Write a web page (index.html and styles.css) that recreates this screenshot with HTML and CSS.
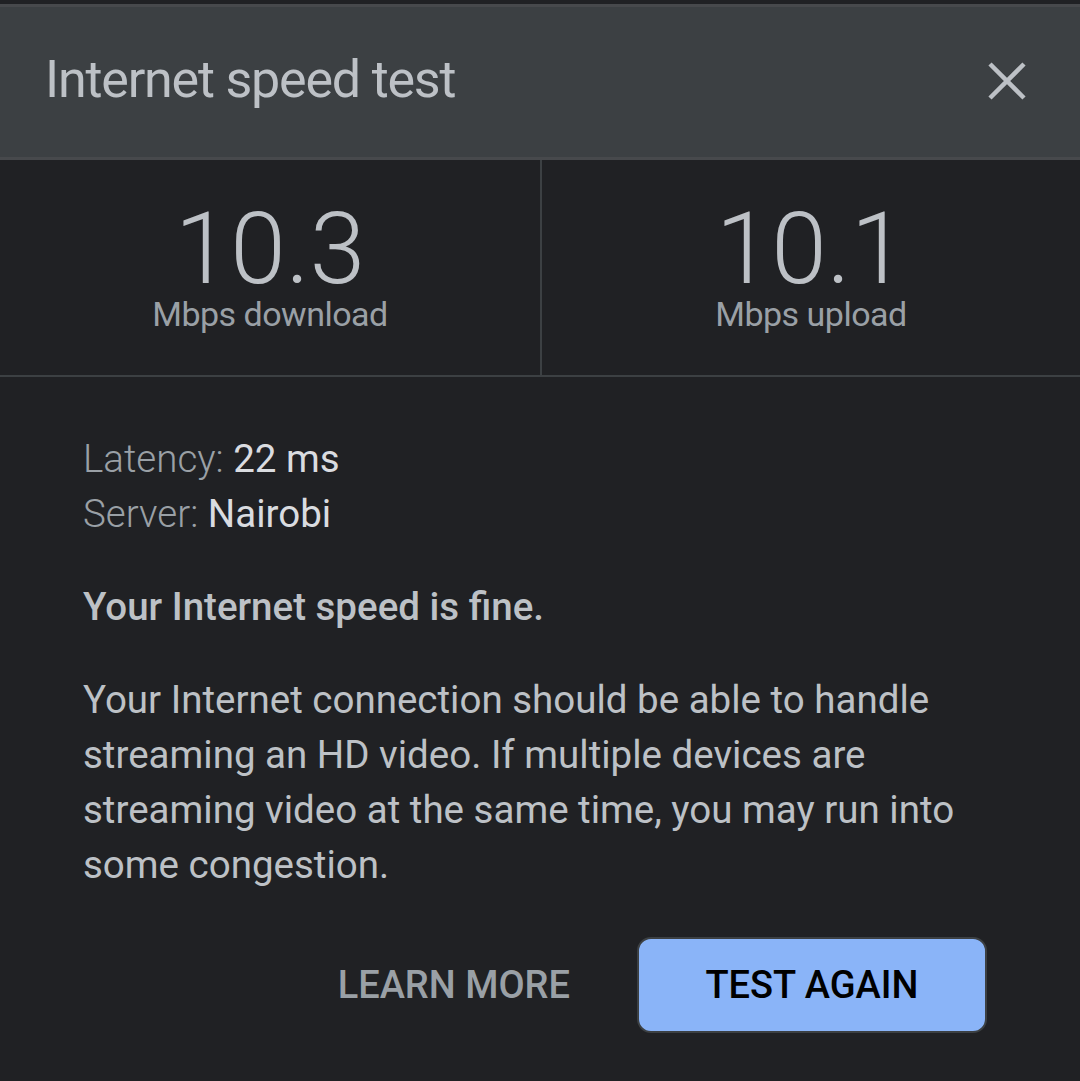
FILE: index.html
```html
<!DOCTYPE html>
<html lang="en">
<head>
    <meta charset="UTF-8">
    <meta name="viewport" content="width=device-width, initial-scale=1.0">
    <title>Internet speed test</title>
    <link rel="stylesheet" href="styles.css">
</head>
<body>
    <div class="dialog">
        <header class="dialog-header">
            <h1 class="dialog-title">Internet speed test</h1>
            <button class="close-btn" aria-label="Close">
                <svg width="38" height="38" viewBox="0 0 38 38">
                    <path d="M2 2 L36 36 M36 2 L2 36" stroke="#bdc1c6" stroke-width="4.5" fill="none"/>
                </svg>
            </button>
        </header>

        <!-- download / upload results -->
        <div class="results">
            <div class="result">
                <div class="result-value">10.3</div>
                <div class="result-label">Mbps download</div>
            </div>
            <div class="result">
                <div class="result-value">10.1</div>
                <div class="result-label">Mbps upload</div>
            </div>
        </div>

        <div class="details">
            <div class="meta">
                <div><span class="meta-key">Latency:</span> <span class="meta-val">22 ms</span></div>
                <div><span class="meta-key">Server:</span> <span class="meta-val">Nairobi</span></div>
            </div>
            <p class="verdict">Your Internet speed is fine.</p>
            <p class="summary">Your Internet connection should be able to handle streaming an HD video. If multiple devices are streaming video at the same time, you may run into some congestion.</p>
        </div>

        <div class="actions">
            <button class="btn-text">LEARN MORE</button>
            <button class="btn-primary">TEST AGAIN</button>
        </div>
    </div>
</body>
</html>
```

FILE: styles.css
```css
body {
    margin: 0;
    padding-top: 4px;
    background-color: #202124;
    font-family: Roboto, "Noto Sans", Arial, sans-serif;
    color: #bdc1c6;
}
.dialog-header {
    display: flex;
    align-items: center;
    justify-content: space-between;
    height: 150px;
    padding: 0 54px 0 45px;
    background-color: #3c4043;
    border-top: 3px solid #47494c;
    border-bottom: 3px solid #47494c;
}
.dialog-title {
    margin: 0 0 6px 0;
    font-size: 52px;
    font-weight: 400;
    letter-spacing: -1.2px;
    color: #bdc1c6;
}
.close-btn {
    width: 38px;
    height: 38px;
    padding: 0;
    border: none;
    background: none;
    cursor: pointer;
    display: flex;
    margin-bottom: 2px;
}
.results {
    display: grid;
    grid-template-columns: 540px 2px 1fr;
    height: 215px;
    border-bottom: 2px solid #3c4043;
}
.results .result + .result {
    border-left: 2px solid #3c4043;
    grid-column: 3;
    margin-left: -2px;
}
.result {
    display: flex;
    flex-direction: column;
    align-items: center;
    padding-top: 44px;
}
.result-value {
    font-size: 100px;
    font-weight: 300;
    line-height: 90px;
    color: #bdc1c6;
}
.result-label {
    font-size: 34px;
    line-height: 40px;
    letter-spacing: -0.5px;
    color: #9aa0a6;
}
.details {
    padding: 54px 83px 0 83px;
    font-size: 38.5px;
    line-height: 55px;
}
.meta-key {
    font-weight: 300;
    color: #9aa0a6;
}
.meta-val {
    color: #dadce0;
}
.verdict {
    margin: 38px 0 0 0;
    font-weight: 500;
    color: #bdc1c6;
}
.summary {
    margin: 38px 0 0 0;
    color: #bdc1c6;
}
.actions {
    display: flex;
    justify-content: flex-end;
    align-items: center;
    gap: 67px;
    padding: 45px 93px 0 0;
}
.btn-text {
    padding: 0;
    border: none;
    background: none;
    font-family: Roboto, Arial, sans-serif;
    font-size: 38px;
    font-weight: 500;
    color: #9aa0a6;
    cursor: pointer;
}
.btn-primary {
    width: 350px;
    height: 96px;
    border-radius: 14px;
    border: 2px solid #3c4043;
    background-color: #8ab4f8;
    font-family: Roboto, Arial, sans-serif;
    font-size: 38px;
    font-weight: 500;
    color: #000;
    cursor: pointer;
}
```
